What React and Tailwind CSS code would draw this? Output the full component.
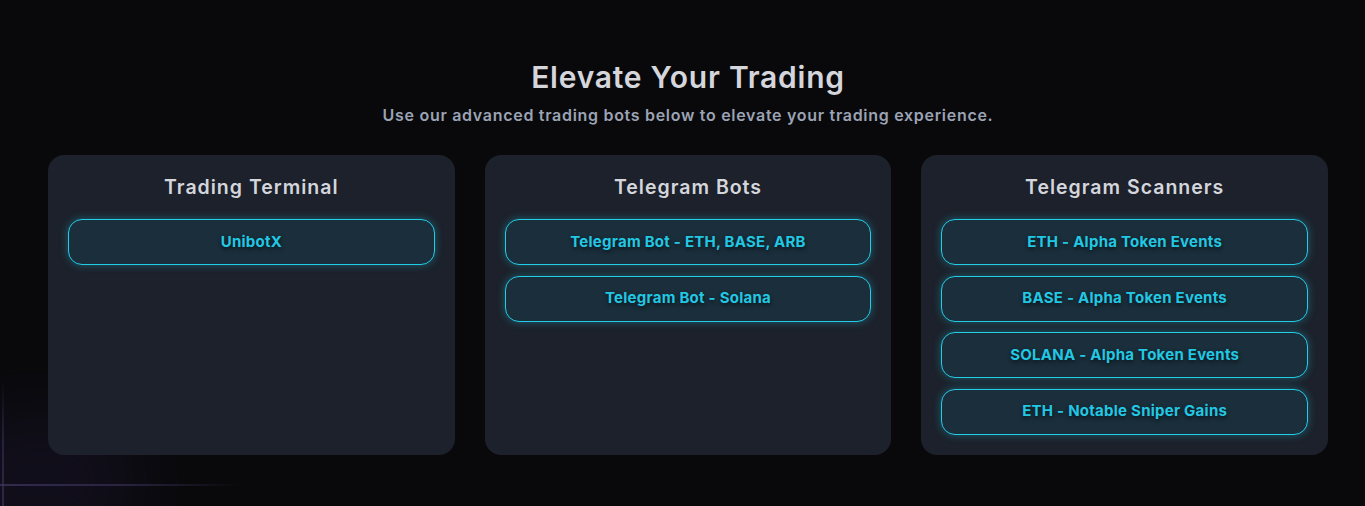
import React from "react";

const cards = [
  { title: "Trading Terminal", items: ["UnibotX"] },
  { title: "Telegram Bots", items: ["Telegram Bot - ETH, BASE, ARB", "Telegram Bot - Solana"] },
  {
    title: "Telegram Scanners",
    items: [
      "ETH - Alpha Token Events",
      "BASE - Alpha Token Events",
      "SOLANA - Alpha Token Events",
      "ETH - Notable Sniper Gains",
    ],
  },
];

export default function App() {
  return (
    <div className="relative w-full h-[506px] overflow-hidden bg-[#09090b]" style={{ fontFamily: "Inter, 'Noto Sans', sans-serif" }}>
      <div className="pointer-events-none absolute left-0 top-[484px] h-[2px] w-[240px] bg-gradient-to-r from-[#4a3f6e] via-[#3a3158] to-transparent opacity-70" />
      <div className="pointer-events-none absolute left-[2px] top-[380px] w-[2px] h-[126px] bg-gradient-to-b from-transparent via-[#3a3158] to-[#4a3f6e] opacity-60" />
      <div className="pointer-events-none absolute -left-[60px] top-[420px] w-[200px] h-[120px] rounded-full bg-[#2a1f4a] opacity-30 blur-2xl" />
      <div className="relative ml-[48px] w-[1280px]">
        <div className="flex flex-col items-center pt-[58px]">
          <h1 className="text-[30px] leading-[38px] font-semibold text-[#d4d6dc] tracking-[0.75px]">Elevate Your Trading</h1>
          <p className="mt-[7px] text-[16px] leading-[24px] font-semibold text-[#9ba3b4] tracking-[0.7px]">
            Use our advanced trading bots below to elevate your trading experience.
          </p>
        </div>
        <div className="mt-[28px] flex gap-[30px]">
          {cards.map((c) => (
            <div key={c.title} className="flex-1 h-[300px] rounded-[16px] bg-[#1c212b] px-[20px] pt-[20px] flex flex-col">
              <h2 className="text-center text-[19.5px] leading-[24px] font-semibold text-[#d4d6dc] tracking-[1px]">{c.title}</h2>
              <div className="mt-[20px] flex flex-col gap-[10.5px]">
                {c.items.map((it) => (
                  <div
                    key={it}
                    className="h-[46px] rounded-[14px] border border-[#22cde6] bg-[#1a2e3b] flex items-center justify-center text-[15px] font-bold tracking-[0.25px] text-[#22c8e3] shadow-[0_0_8px_rgba(34,211,238,0.35)] [text-shadow:0_2px_4px_rgba(0,0,0,0.6)]"
                  >
                    {it}
                  </div>
                ))}
              </div>
            </div>
          ))}
        </div>
      </div>
    </div>
  );
}
